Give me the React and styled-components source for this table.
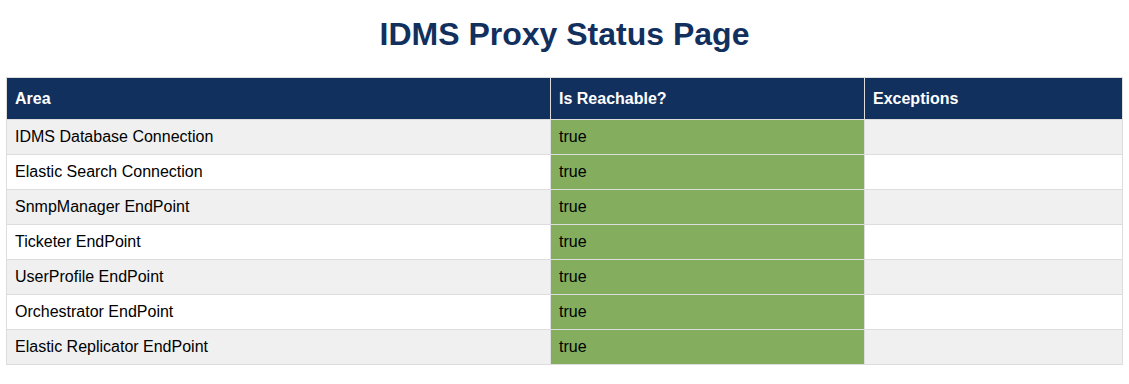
import React from 'react';
import styled, { createGlobalStyle } from 'styled-components';

const GlobalStyle = createGlobalStyle`
  body {
    margin: 0;
    background: #fff;
    font-family: "Liberation Sans", Arial, sans-serif;
  }
`;

const Page = styled.div`
  padding: 0 6px;
`;

const Title = styled.h1`
  margin: 16px 0 24px;
  text-align: center;
  font-size: 32px;
  font-weight: bold;
  line-height: 37px;
  color: #12305e;
`;

const Table = styled.table`
  width: 100%;
  border-collapse: collapse;
  border: 1px solid #ddd;
  font-size: 16px;
`;

const HeadCell = styled.th`
  box-sizing: border-box;
  background: #12305e;
  color: #fff;
  text-align: left;
  font-weight: bold;
  padding: 12px 8px;
  line-height: 17px;
  border: 1px solid #ddd;
  width: ${(p) => p.$w || 'auto'};
`;

const Row = styled.tr`
  background: ${(p) => (p.$odd ? '#f0f0f0' : '#fff')};
`;

const Cell = styled.td`
  padding: 8px;
  line-height: 18px;
  color: #000;
  border: 1px solid #ddd;
  background: ${(p) => (p.$ok ? '#84ae5e' : 'transparent')};
`;

const areas = [
  'IDMS Database Connection',
  'Elastic Search Connection',
  'SnmpManager EndPoint',
  'Ticketer EndPoint',
  'UserProfile EndPoint',
  'Orchestrator EndPoint',
  'Elastic Replicator EndPoint',
];

const App = function () {
  return (
    <Page>
      <GlobalStyle />
      <Title>IDMS Proxy Status Page</Title>
      <Table>
        <thead>
          <tr>
            <HeadCell $w="544px">Area</HeadCell>
            <HeadCell $w="314px">Is Reachable?</HeadCell>
            <HeadCell>Exceptions</HeadCell>
          </tr>
        </thead>
        <tbody>
          {areas.map((area, i) => (
            <Row key={area} $odd={i % 2 === 0}>
              <Cell>{area}</Cell>
              <Cell $ok>true</Cell>
              <Cell></Cell>
            </Row>
          ))}
        </tbody>
      </Table>
    </Page>
  );
};

export default App;
